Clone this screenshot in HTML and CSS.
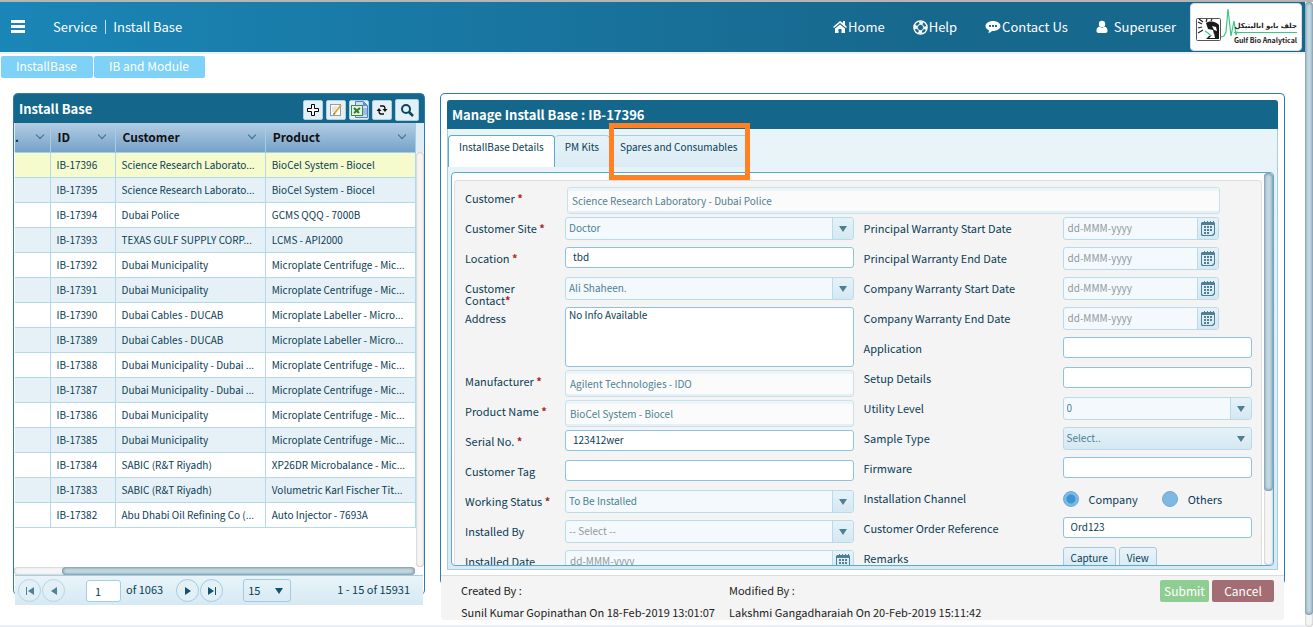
FILE: index.html
```html
<!DOCTYPE html>
<html lang="en">
<head>
  <meta charset="UTF-8">
  <meta name="viewport" content="width=device-width, initial-scale=1.0">
  <title>Install Base</title>
  <link rel="stylesheet" href="styles.css">
</head>
<body>
<svg class="defs" width="0" height="0">
  <symbol id="cal" viewBox="0 0 14 15">
    <path fill="#4f7f92" fill-rule="evenodd" d="M2 1h1V0h1v1h2V0h1v1h2V0h1v1h2V0h1v1l1 1v11l-1 1-1 1H1l-1-1V2l1-1zM1 4v9l1 1h9l2-2V4z"/>
    <path fill="#4f7f92" d="M6 5h2v2H6zM9 5h2v2H9zM3 8h2v2H3zM6 8h2v2H6zM9 8h2v2H9zM3 11h2v2H3zM6 11h2v2H6zM3 5h2v2H3z"/>
  </symbol>
</svg>
<div class="page">
  <header class="topbar">
    <button class="menu" aria-label="Menu"><span></span><span></span><span></span></button>
    <div class="crumbs"><a href="#">Service</a><i></i><a href="#">Install Base</a></div>
    <nav class="nav">
      <a href="#"><svg width="14" height="14" viewBox="0 0 14 14"><path fill="#fff" d="M7 1 0 7l1 1 6-5 6 5 1-1-2-2V1h-2v2zM2 8.500l5-4 5 4V13H8.500V9h-3v4H2z"/></svg>Home</a>
      <a href="#"><svg width="15" height="15" viewBox="0 0 15 15"><circle cx="7.500" cy="7.500" r="6.600" fill="none" stroke="#fff" stroke-width="1.400"/><circle cx="7.500" cy="7.500" r="4.800" fill="none" stroke="#fff" stroke-width="3" stroke-dasharray="3.770 3.770" stroke-dashoffset="1.880"/><circle cx="7.500" cy="7.500" r="3.200" fill="none" stroke="#fff"/></svg>Help</a>
      <a href="#"><svg width="16" height="14" viewBox="0 0 16 14"><path fill="#fff" d="M8 1c4 0 7.500 2.200 7.500 5S12 11 8 11H7c-1 1.200-2.500 2-4 2 .8-.8 1-1.700 1-2.600C2 9.500.5 8 .5 6 .5 3.200 4 1 8 1z"/><path fill="#17719c" d="M4 5h2v2H4zM7 5h2v2H7zM10 5h2v2h-2z"/></svg>Contact Us</a>
      <a href="#" class="user"><svg width="12" height="14" viewBox="0 0 12 14"><circle cx="6" cy="4" r="3.200" fill="#fff"/><path fill="#fff" d="M3.500 6.500C1 7 .5 9 .5 11c0 1.300.8 2 2 2h7c1.200 0 2-.7 2-2 0-2-.5-4-3-4.500C7.500 8 4.500 8 3.500 6.500z"/></svg>Superuser</a>
    </nav>
    <div class="logo">
      <svg width="44" height="40" viewBox="0 0 44 40">
        <rect x="1.500" y="11.500" width="24" height="22" rx="1" fill="#fff" stroke="#555"/>
        <path fill="#1a1a1a" d="M11 16c5-3 10-1 13 2v14H11l3-3 5-1-1-5-5-1z"/>
        <path fill="#fff" d="m17 19 4 1 1 4-3-1zM14 31l5-5 1 5z"/>
        <path stroke="#222" stroke-width="1.200" fill="none" d="m3 15 4 2m-3-5 4 3m4-3-1 3m6-3-1 2M3 21l4-1m-4 6 5-3"/>
        <path stroke="#3cc585" stroke-width="1.200" fill="none" d="m10 24 3 2 3 3M26 30l3-1 2-4 2-23 3 27 3-15 2 14 1-3 2 1"/>
      </svg>
      <div class="logo-text"><b lang="ar">جلف بايو اناليتيكل</b><strong>Gulf Bio Analytical</strong></div>
    </div>
  </header>

  <div class="subnav">
    <button>InstallBase</button>
    <button>IB and Module</button>
  </div>

  <main class="main">
    <section class="list">
      <div class="list-inner">
        <div class="bar">
          <h2>Install Base</h2>
          <div class="tools">
            <button aria-label="Add"><svg width="14" height="14" viewBox="0 0 14 14"><path d="M5.500 1.500h3v4h4v3h-4v4h-3v-4h-4v-3h4z" fill="#fff" stroke="#000"/></svg></button>
            <button aria-label="Edit"><svg width="14" height="14" viewBox="0 0 14 14"><rect x="1.500" y="1.500" width="10" height="11" fill="#fff" stroke="#999"/><path d="M3 4h5M3 6h4M3 8h3" stroke="#ccc"/><path d="m5 11 7-9" stroke="#e0a63a" stroke-width="2"/><path d="m4 12 1-2 1 1z" fill="#333"/></svg></button>
            <button aria-label="Export to Excel"><svg width="17" height="17" viewBox="0 0 17 17"><path d="M4.500.5h8l4 4v12h-12z" fill="#cfe0f7" stroke="#5a7fc0"/><path d="M12 .5V5h4.500z" fill="#5f8be0"/><path d="M12 7h4v7h-4z" fill="#9dbbe8"/><rect x=".5" y="4.500" width="11" height="10" fill="#e4f2e0" stroke="#3f8b3f"/><path d="m3 7 5 5m1-5-6 5" stroke="#2d7d32" stroke-width="2"/></svg></button>
            <button aria-label="Refresh"><svg width="14" height="14" viewBox="0 0 14 14"><path d="M5 3h3q2 0 2 3M9 11H6q-2 0-2-3" fill="none" stroke="#111" stroke-width="1.300"/><path d="M7.500 6h5L10 9zM1.500 8h5L4 5z" fill="#111"/></svg></button>
            <button class="find" aria-label="Search"><svg width="16" height="16" viewBox="0 0 16 16"><circle cx="7" cy="7" r="4" fill="none" stroke="#0b4660" stroke-width="2"/><path d="m10 10 4 4" stroke="#0b4660" stroke-width="2.500"/></svg></button>
          </div>
        </div>
        <div class="grid-area">
          <table class="grid">
            <colgroup><col class="c-blank"><col class="c-id"><col><col></colgroup>
            <thead><tr><th><div>.</div></th><th><div>ID</div></th><th><div>Customer</div></th><th><div>Product</div></th></tr></thead>
            <tbody>
              <tr class="selected"><td></td><td>IB-17396</td><td>Science Research Laborato...</td><td>BioCel System - Biocel</td></tr>
              <tr><td></td><td>IB-17395</td><td>Science Research Laborato...</td><td>BioCel System - Biocel</td></tr>
              <tr><td></td><td>IB-17394</td><td>Dubai Police</td><td>GCMS QQQ - 7000B</td></tr>
              <tr><td></td><td>IB-17393</td><td>TEXAS GULF SUPPLY CORP...</td><td>LCMS - API2000</td></tr>
              <tr><td></td><td>IB-17392</td><td>Dubai Municipality</td><td>Microplate Centrifuge - Mic...</td></tr>
              <tr><td></td><td>IB-17391</td><td>Dubai Municipality</td><td>Microplate Centrifuge - Mic...</td></tr>
              <tr><td></td><td>IB-17390</td><td>Dubai Cables - DUCAB</td><td>Microplate Labeller - Micro...</td></tr>
              <tr><td></td><td>IB-17389</td><td>Dubai Cables - DUCAB</td><td>Microplate Labeller - Micro...</td></tr>
              <tr><td></td><td>IB-17388</td><td>Dubai Municipality - Dubai ...</td><td>Microplate Centrifuge - Mic...</td></tr>
              <tr><td></td><td>IB-17387</td><td>Dubai Municipality - Dubai ...</td><td>Microplate Centrifuge - Mic...</td></tr>
              <tr><td></td><td>IB-17386</td><td>Dubai Municipality</td><td>Microplate Centrifuge - Mic...</td></tr>
              <tr><td></td><td>IB-17385</td><td>Dubai Municipality</td><td>Microplate Centrifuge - Mic...</td></tr>
              <tr><td></td><td>IB-17384</td><td>SABIC (R&amp;T Riyadh)</td><td>XP26DR Microbalance - Mic...</td></tr>
              <tr><td></td><td>IB-17383</td><td>SABIC (R&amp;T Riyadh)</td><td>Volumetric Karl Fischer Tit...</td></tr>
              <tr><td></td><td>IB-17382</td><td>Abu Dhabi Oil Refining Co (...</td><td>Auto Injector - 7693A</td></tr>
            </tbody>
          </table>
          <div class="vscroll grid-v"></div>
        </div>
        <div class="hscroll"><div class="thumb"></div></div>
        <div class="pager">
          <button class="off" aria-label="First page"><svg width="10" height="10" viewBox="0 0 10 10"><path d="M1 1h1v8H1zM9 1v8L3 5z"/></svg></button>
          <button class="off" aria-label="Previous page"><svg width="10" height="10" viewBox="0 0 10 10"><path d="M8 1v8L2 5z"/></svg></button>
          <input class="page-no" aria-label="Page" value="1">
          <span>of 1063</span>
          <button class="next" aria-label="Next page"><svg width="10" height="10" viewBox="0 0 10 10"><path d="M2 1v8l6-4z"/></svg></button>
          <button aria-label="Last page"><svg width="10" height="10" viewBox="0 0 10 10"><path d="M1 1v8l6-4zM8 1h1v8H8z"/></svg></button>
          <div class="rows"><select aria-label="Rows per page"><option>15</option></select><i></i></div>
          <span class="total">1 - 15 of 15931</span>
        </div>
      </div>
    </section>

    <section class="detail">
      <div class="bar"><h2>Manage Install Base : IB-17396</h2></div>
      <div class="tabbox">
        <div class="tabs">
          <button class="tab active">InstallBase Details</button>
          <button class="tab">PM Kits</button>
          <button class="tab marked">Spares and Consumables</button>
        </div>
        <div class="pane">
          <form class="form">
            <div class="row customer"><label for="customer">Customer <em>*</em></label><input id="customer" class="locked" value="Science Research Laboratory - Dubai Police" disabled></div>
            <div class="columns">
              <div class="left">
                <div class="row"><label for="site">Customer Site <em>*</em></label><div class="combo"><select id="site" disabled><option>Doctor</option></select><span><i></i></span></div></div>
                <div class="row"><label for="location">Location <em>*</em></label><input id="location" value="tbd"></div>
                <div class="row"><label for="contact">Customer<br>Contact<em>*</em></label><div class="combo"><select id="contact" disabled><option>Ali Shaheen.</option></select><span><i></i></span></div></div>
                <div class="row tall"><label for="address">Address</label><textarea id="address">No Info Available</textarea></div>
                <div class="row"><label for="maker">Manufacturer <em>*</em></label><input id="maker" class="locked" value="Agilent Technologies - IDO" disabled></div>
                <div class="row"><label for="product">Product Name <em>*</em></label><input id="product" class="locked" value="BioCel System - Biocel" disabled></div>
                <div class="row"><label for="serial">Serial No. <em>*</em></label><input id="serial" value="123412wer"></div>
                <div class="row"><label for="tag">Customer Tag</label><input id="tag"></div>
                <div class="row"><label for="status">Working Status <em>*</em></label><div class="combo"><select id="status" disabled><option>To Be Installed</option></select><span><i></i></span></div></div>
                <div class="row"><label for="by">Installed By</label><div class="combo empty"><select id="by" disabled><option>-- Select --</option></select><span><i></i></span></div></div>
                <div class="row"><label for="on">Installed Date</label><div class="combo"><input id="on" placeholder="dd-MMM-yyyy" disabled><button type="button" aria-label="Pick date"><svg width="14" height="15"><use href="#cal"/></svg></button></div></div>
              </div>
              <div class="right">
                <div class="row"><label for="pws">Principal Warranty Start Date</label><div class="combo date"><input id="pws" placeholder="dd-MMM-yyyy" disabled><button type="button" aria-label="Pick date"><svg width="14" height="15"><use href="#cal"/></svg></button></div></div>
                <div class="row"><label for="pwe">Principal Warranty End Date</label><div class="combo date"><input id="pwe" placeholder="dd-MMM-yyyy" disabled><button type="button" aria-label="Pick date"><svg width="14" height="15"><use href="#cal"/></svg></button></div></div>
                <div class="row"><label for="cws">Company Warranty Start Date</label><div class="combo date"><input id="cws" placeholder="dd-MMM-yyyy" disabled><button type="button" aria-label="Pick date"><svg width="14" height="15"><use href="#cal"/></svg></button></div></div>
                <div class="row"><label for="cwe">Company Warranty End Date</label><div class="combo date"><input id="cwe" placeholder="dd-MMM-yyyy" disabled><button type="button" aria-label="Pick date"><svg width="14" height="15"><use href="#cal"/></svg></button></div></div>
                <div class="row"><label for="app">Application</label><input id="app"></div>
                <div class="row"><label for="setup">Setup Details</label><input id="setup"></div>
                <div class="row"><label for="utility">Utility Level</label><div class="combo"><select id="utility" disabled><option>0</option></select><span><i></i></span></div></div>
                <div class="row"><label for="sample">Sample Type</label><div class="combo solid"><select id="sample" disabled><option>Select..</option></select><span><i></i></span></div></div>
                <div class="row"><label for="firmware">Firmware</label><input id="firmware"></div>
                <div class="row"><span class="caption">Installation Channel</span><div class="radios"><input type="radio" name="channel" id="company" checked><label for="company">Company</label><input type="radio" name="channel" id="others"><label for="others">Others</label></div></div>
                <div class="row"><label for="order">Customer Order Reference</label><input id="order" value="Ord123"></div>
                <div class="row"><span class="caption">Remarks</span><div class="remarks"><button type="button">Capture</button><button type="button">View</button></div></div>
              </div>
            </div>
          </form>
          <div class="vscroll"><div class="thumb"></div></div>
        </div>
      </div>
      <footer class="foot">
        <div class="who"><span>Created By :</span><span>Sunil Kumar Gopinathan On 18-Feb-2019 13:01:07</span></div>
        <div class="who"><span>Modified By :</span><span>Lakshmi Gangadharaiah On 20-Feb-2019 15:11:42</span></div>
        <div class="actions"><button class="submit">Submit</button><button class="cancel">Cancel</button></div>
      </footer>
    </section>
  </main>
</div>
<div class="vscroll page-scroll"><div class="thumb"></div></div>
</body>
</html>
```
FILE: styles.css
```css
* {
  box-sizing: border-box;
}

body {
  margin: 0;
  height: 100vh;
  display: flex;
  overflow: hidden;
  border-top: 2px solid #b5b5b5;
  background: #fff;
  color: #0b3d54;
  font-family: "Trebuchet MS", "Noto Sans CJK SC", sans-serif;
  font-size: 11px;
  line-height: 12px;
}

button, input, select, textarea {
  font: inherit;
  color: inherit;
  margin: 0;
}

input, select, textarea, .tab, .grid td, .remarks button {
  font-size: 10px;
}

a {
  color: inherit;
  text-decoration: none;
}

button {
  padding: 0;
  cursor: pointer;
}

.defs {
  position: absolute;
}

.page {
  flex: 1;
  min-width: 0;
  display: flex;
  flex-direction: column;
  border-bottom: 2px solid #eceff4;
}

/* header */
.topbar {
  height: 50px;
  flex: none;
  display: flex;
  align-items: center;
  padding: 0 3px 0 11px;
  background: linear-gradient(to right, #1a86b7, #17688d 70%);
  color: #fff;
  font-family: "Noto Sans CJK SC", sans-serif;
  font-size: 13px;
  line-height: 18px;
}

.menu {
  width: 14px;
  display: grid;
  gap: 2px;
  padding-bottom: 2px;
  border: 0;
  background: none;
}

.menu span {
  height: 3px;
  background: #fff;
}

.crumbs {
  display: flex;
  align-items: center;
  margin-left: 28px;
}

.crumbs i {
  width: 1px;
  height: 14px;
  margin: 0 7px 0 8px;
  background: #c6dfea;
}

.nav {
  display: flex;
  margin-left: auto;
  gap: 28px;
}

.nav a {
  display: flex;
  align-items: center;
  gap: 1px;
}

.nav .user {
  gap: 6px;
}

.logo {
  display: flex;
  align-items: center;
  width: 112px;
  height: 48px;
  margin-left: 14px;
  padding: 0 4px;
  background: #fff;
  border: 1px solid #ddd;
  border-radius: 4px;
  color: #222;
}

.logo svg {
  flex: none;
}

.logo-text {
  flex: 1;
  min-width: 0;
  display: flex;
  flex-direction: column;
  align-items: flex-end;
  padding-top: 12px;
  white-space: nowrap;
}

.logo-text b {
  font: bold 7px/12px "DejaVu Sans", sans-serif;
  border-bottom: 1px solid #3cc585;
}

.logo-text strong {
  font: bold 7px/14px "Noto Sans CJK SC", sans-serif;
}

.subnav {
  display: flex;
  gap: 1px;
  padding: 2px 1px 1px;
  border-top: 2px solid #edf0f4;
}

.subnav button {
  height: 22px;
  padding: 0 16px 2px 15px;
  border: 0;
  border-radius: 2px;
  background: #7ed1f7;
  color: #fff;
  font-size: 12px;
}

/* two panels */
.main {
  flex: 1;
  min-height: 0;
  display: grid;
  grid-template-columns: 412fr 845fr;
  gap: 15px;
  padding: 14px 20px 5px 13px;
}

.list, .detail {
  min-width: 0;
  min-height: 0;
  display: flex;
  flex-direction: column;
  border: 1px solid #3079b5;
  border-bottom: 0;
  border-radius: 5px;
}

.list {
  margin-bottom: 25px;
}

.list-inner {
  flex: 1;
  min-height: 0;
  display: flex;
  flex-direction: column;
  margin-bottom: -10px;
}

.bar {
  flex: none;
  height: 29px;
  display: flex;
  align-items: center;
  justify-content: space-between;
  padding: 0 5px;
  background: #14678b;
  border-radius: 3px 3px 0 0;
  color: #fff;
}

.bar h2 {
  margin: 0;
  font-size: 13px;
  line-height: 18px;
}

.tools {
  display: flex;
  align-items: center;
  gap: 3px;
  padding-top: 2px;
}

.tools button {
  width: 20px;
  height: 20px;
  display: grid;
  place-items: center;
  border: 1px solid #a9cfe1;
  border-radius: 2px;
  background: #e3f0f7;
}

.tools .find {
  width: 24px;
  height: 22px;
}

.grid-area {
  flex: 1;
  min-height: 0;
  display: flex;
  padding-left: 1px;
  background: linear-gradient(#dfeef6, #dfeef6) 0 0 / 100% 29px no-repeat;
}

.grid {
  flex: 1;
  width: 0;
  table-layout: fixed;
  border-collapse: collapse;
  align-self: flex-start;
}

.c-blank {
  width: 35px;
}

.c-id {
  width: 65px;
}

.grid thead {
  background: linear-gradient(#b3cde3, #76a2c9);
}

.grid th {
  height: 29px;
  padding: 0 9px 0 7px;
  border-right: 1px solid #a3cfe2;
  border-bottom: 1px solid #a3cfe2;
  color: #111;
  font-size: 12px;
  text-align: left;
}

.grid th:first-child {
  padding: 0 6px 0 0;
}

.grid th div {
  display: flex;
  align-items: center;
  justify-content: space-between;
}

.grid th div::after {
  content: "";
  width: 5px;
  height: 5px;
  margin: 0 1px 5px 0;
  border: solid #356f8d;
  border-width: 0 1px 1px 0;
  transform: rotate(45deg);
}

.grid td {
  height: 25px;
  padding: 0 6px;
  border-right: 1px solid #b3d8e8;
  border-bottom: 1px solid #b3d8e8;
  overflow: hidden;
  white-space: nowrap;
}

.grid tbody tr:nth-child(even) {
  background: #e6f1f7;
}

.grid tbody .selected {
  background: #f5fbcd;
}

.vscroll {
  flex: none;
  width: 9px;
  border-radius: 4px;
  background: #f5f5f5;
  box-shadow: inset 0 0 2px #999;
}

.grid-v {
  width: 8px;
  margin-top: 29px;
}

.thumb {
  border-radius: 4px;
  background: #c3dae5;
  box-shadow: inset 0 0 3px 1px #76909c;
}

.hscroll {
  flex: none;
  height: 8px;
  margin-right: 9px;
  border-radius: 4px;
  background: #f5f5f5;
  box-shadow: inset 0 0 2px #999;
}

.hscroll .thumb {
  height: 8px;
  margin-left: 12%;
}

.pager {
  flex: none;
  height: 30px;
  display: flex;
  align-items: center;
  padding: 0 13px 0 3px;
  margin: 0 1px;
  border-top: 1px solid #a5cfe0;
  background: linear-gradient(#e9f4f9, #d6e9f3);
}

.pager span {
  padding-bottom: 4px;
}

.pager button {
  width: 23px;
  height: 23px;
  margin-right: 1px;
  display: grid;
  place-items: center;
  border: 1px solid #9fcce1;
  border-radius: 50%;
  background: #e3f1f7;
  fill: #14536f;
}

.pager .off {
  opacity: .7;
}

.pager input, .pager select {
  font-size: 11px;
}

.page-no {
  width: 35px;
  height: 22px;
  margin: 0 5px 0 20px;
  padding: 0 8px;
  border: 1px solid #a3cfe2;
  border-radius: 3px;
  background: #fff;
}

.pager .next {
  margin-left: 13px;
}

.rows {
  width: 48px;
  height: 23px;
  display: flex;
  align-items: center;
  margin-left: 19px;
  padding-right: 7px;
  border: 1px solid #9fcce1;
  border-radius: 3px;
}

select {
  appearance: none;
  flex: 1;
  min-width: 0;
  padding: 0 4px 2px;
  border: 0;
  background: none;
  opacity: 1;
}

.rows i, .combo i {
  border: solid transparent;
  border-width: 6px 4px 0;
  border-top-color: #14536f;
}

.total {
  margin-left: auto;
}

/* detail panel */
.detail {
  padding: 6px 0 0;
  margin-bottom: 35px;
}

.detail .bar {
  margin: 0 6px;
}

.tabbox {
  flex: 1;
  min-height: 0;
  display: flex;
  flex-direction: column;
  margin: 0 6px 5px;
  padding: 6px 3px 3px;
  border: 1px solid #a5cfe0;
  border-top: 0;
  background: linear-gradient(#e9f4f9, #d9eaf4);
}

.tabs {
  flex: none;
  display: flex;
  height: 37px;
  margin-left: -3px;
}

.tab {
  position: relative;
  height: 32px;
  padding: 0 10px 10px;
  border: 1px solid #a5cfe0;
  border-bottom: 0;
  border-left: 0;
  border-radius: 4px 4px 0 0;
  background: linear-gradient(#e6f2f8, #dcecf5);
}

.tab.active {
  border: 1px solid #5aa9cf;
  border-bottom: 0;
  background: #fff;
}

/* callout frame drawn over the tab strip */
.marked::after {
  content: "";
  position: absolute;
  inset: -13px -3px -13px -1px;
  border: 5px solid #ff8124;
}

.pane {
  flex: 1;
  min-height: 0;
  display: flex;
  gap: 2px;
  padding-left: 2px;
  border: 1px solid #5aa9cf;
  border-radius: 4px;
  background: #fff;
  overflow: hidden;
}

.pane .vscroll .thumb {
  height: 81%;
}

.form {
  flex: 1;
  min-width: 0;
  align-self: flex-start;
  margin-top: 7px;
  padding: 6px 9px 12px 10px;
  border: 1px solid #ddd;
  border-bottom: 0;
  border-radius: 4px 4px 0 0;
  background: #f4f4f4;
}

.row {
  display: flex;
  align-items: flex-start;
  height: 30px;
}

.row.tall {
  height: 63px;
}

.row > label, .caption {
  flex: none;
  width: 100px;
  padding-top: 5px;
}

.right .row > label, .right .caption {
  width: 199px;
}

.row.customer > label {
  width: 102px;
}

.row.customer {
  padding-right: 32px;
}

.row em {
  color: #b0231f;
  font-style: normal;
  font-weight: bold;
}

.columns {
  display: grid;
  grid-template-columns: 1fr 1fr;
  gap: 10px;
}

.row > input, textarea {
  flex: 1;
  min-width: 0;
  height: 21px;
  padding: 0 7px 2px;
  border: 1px solid #8fc3dd;
  border-radius: 3px;
  background: #fff;
}

.row > textarea {
  height: 60px;
  padding: 1px 3px;
  resize: none;
}

.row > .locked {
  height: 27px;
  padding: 0 4px 1px;
  border-color: #c9e1ec;
  background: #fbfbfb;
  box-shadow: inset 0 3px 0 #eef5f9, inset 0 -2px 0 #e4f0f6;
  color: #4f7f92;
}

.combo {
  flex: 1;
  min-width: 0;
  height: 23px;
  display: flex;
  border: 1px solid #b7dbe9;
  border-radius: 3px;
  background: #f3f9fc;
  color: #4f7f92;
  overflow: hidden;
}

.combo.date {
  flex: none;
  width: 156px;
}

.combo input {
  flex: 1;
  min-width: 0;
  padding: 0 4px 2px;
  border: 0;
  background: none;
}

.combo select {
  padding: 0 3px 2px;
}

.combo.empty, ::placeholder {
  color: #929a9e;
}

.combo span, .combo button {
  width: 21px;
  display: grid;
  place-items: center;
  border: 0;
  border-left: 1px solid #b7dbe9;
  background: linear-gradient(#e6f2f8, #d5e8f3);
}

.combo i {
  border-top-color: #4f7f92;
}

.combo.solid {
  background: linear-gradient(#e6f2f8, #d5e8f3);
}

.solid span {
  border: 0;
  background: none;
}

.radios {
  display: flex;
  align-items: center;
  height: 24px;
}

.radios input {
  appearance: none;
  width: 16px;
  height: 16px;
  margin-right: 10px;
  border: 1px solid #68abd9;
  border-radius: 50%;
  background: #7fb9e2;
}

.radios input:checked {
  background: radial-gradient(#3a97d3 4px, #7fb9e2 5px);
}

.radios label {
  margin-right: 24px;
}

.remarks {
  display: flex;
  gap: 3px;
}

.remarks button {
  height: 24px;
  padding: 0 7px 2px;
  border: 1px solid #a0cbe0;
  border-radius: 3px;
  background: linear-gradient(#e9f4f9, #d6e9f3);
}

.foot {
  flex: none;
  height: 45px;
  display: flex;
  margin-bottom: -35px;
  padding: 4px 10px 0 20px;
  border-top: 1px solid #ddd;
  border-radius: 0 0 4px 4px;
  background: #f4f4f4;
  color: #222;
}

.who {
  display: flex;
  flex-direction: column;
  gap: 6px;
  width: 268px;
  padding-top: 2px;
  line-height: 16px;
  white-space: nowrap;
}

.actions {
  display: flex;
  gap: 3px;
  margin-left: auto;
}

.actions button {
  height: 22px;
  border: 0;
  border-radius: 2px;
  color: #fff;
  font-size: 12px;
}

.actions .submit {
  width: 49px;
  background: #8fce92;
}

.actions .cancel {
  width: 62px;
  background: #a36e73;
}

.page-scroll {
  width: 8px;
}

.page-scroll .thumb {
  height: 98%;
}
```
